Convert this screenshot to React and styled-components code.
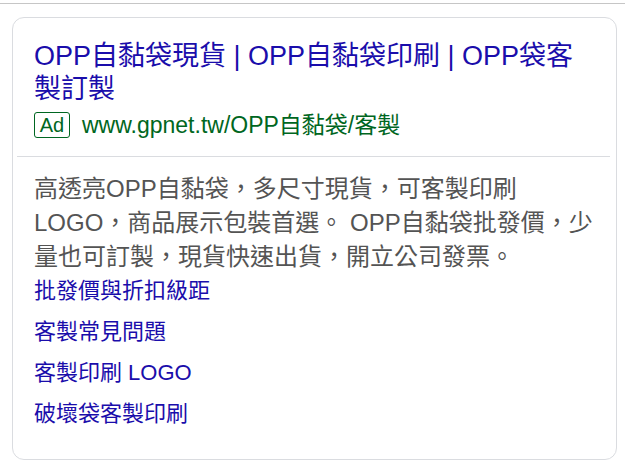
import React from "react";
import styled, { createGlobalStyle } from "styled-components";

const GlobalStyle = createGlobalStyle`
  html, body {
    margin: 0;
    padding: 0;
    background: #ffffff;
  }
  body {
    font-family: "Liberation Sans", "Noto Sans CJK TC", Arial, sans-serif;
  }
`;

const TopRule = styled.div`
  height: 3px;
  border-bottom: 1px solid #c6c6c6;
`;

const Card = styled.div`
  margin: 13px 8px 0 12px;
  border: 1px solid #dadce0;
  border-radius: 12px;
  background: #ffffff;
  overflow: hidden;
`;

const Header = styled.div`
  padding: 22px 21px 18px;
`;

const Title = styled.a`
  display: block;
  font-size: 27px;
  line-height: 33px;
  color: #1a0dab;
  text-decoration: none;
`;

const AdRow = styled.div`
  display: flex;
  align-items: center;
  gap: 12px;
  margin-top: 6px;
  height: 26px;
`;

const AdBadge = styled.span`
  display: inline-flex;
  align-items: center;
  justify-content: center;
  box-sizing: border-box;
  width: 36px;
  height: 26px;
  border: 1px solid #006621;
  border-radius: 3px;
  color: #006621;
  font-size: 20px;
  line-height: 1;
`;

const Url = styled.span`
  color: #006621;
  font-size: 23px;
  line-height: 26px;
`;

const Divider = styled.div`
  margin: 0 6px 0 4px;
  border-top: 1px solid #dadce0;
`;

const Body = styled.div`
  padding: 15px 21px 30px;
`;

const Description = styled.p`
  margin: 0;
  font-size: 24px;
  line-height: 34px;
  color: #545454;
`;

const Links = styled.div`
  display: flex;
  flex-direction: column;
  gap: 11px;
  margin-top: 2px;
`;

const SiteLink = styled.a`
  font-size: 22px;
  line-height: 30px;
  color: #1a0dab;
  text-decoration: none;
`;

const sitelinks = ["批發價與折扣級距", "客製常見問題", "客製印刷 LOGO", "破壞袋客製印刷"];

export default function App() {
  return (
    <>
      <GlobalStyle />
      <TopRule />
      <Card>
        <Header>
          <Title href="#">OPP自黏袋現貨 | OPP自黏袋印刷 | OPP袋客製訂製</Title>
          <AdRow>
            <AdBadge>Ad</AdBadge>
            <Url>www.gpnet.tw/OPP自黏袋/客製</Url>
          </AdRow>
        </Header>
        <Divider />
        <Body>
          <Description>
            高透亮OPP自黏袋，多尺寸現貨，可客製印刷 LOGO，商品展示包裝首選。 OPP自黏袋批發價，少量也可訂製，現貨快速出貨，開立公司發票。
          </Description>
          <Links>
            {sitelinks.map((label) => (
              <SiteLink key={label} href="#">
                {label}
              </SiteLink>
            ))}
          </Links>
        </Body>
      </Card>
    </>
  );
}
